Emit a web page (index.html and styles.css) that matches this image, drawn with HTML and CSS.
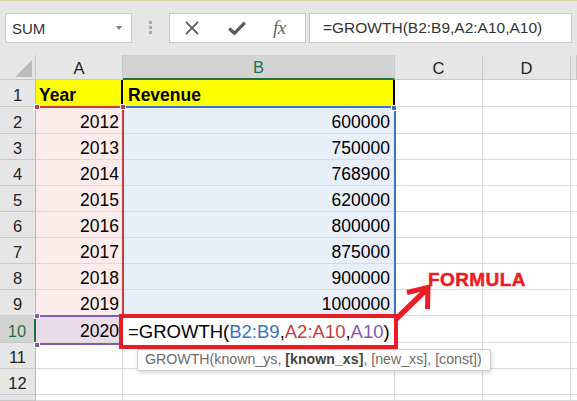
FILE: index.html
```html
<!DOCTYPE html>
<html>
<head>
<meta charset="utf-8">
<link rel="stylesheet" href="styles.css">
</head>
<body>
<div class="toolbar">
  <div class="namebox"><span>SUM</span><span class="caret"></span></div>
  <div class="dots"><i></i><i></i><i></i></div>
  <div class="fxbox">
    <svg class="ico-x" width="14" height="14" viewBox="0 0 14 14"><path d="M1 1 L13 13 M13 1 L1 13" stroke="#666" stroke-width="1.8" fill="none"/></svg>
    <svg class="ico-ok" width="18" height="14" viewBox="0 0 18 14"><path d="M1.2 7.5 L6.5 12.3 L16.8 1.6" stroke="#5a5a5a" stroke-width="3.2" fill="none"/></svg>
    <span class="fx">fx</span>
  </div>
  <div class="formula">=GROWTH(B2:B9,A2:A10,A10)</div>
</div>

<div class="grid">
  <div class="cell hdr corner"><span class="tri"></span></div>
  <div class="cell hdr">A</div>
  <div class="cell hdr sel">B</div>
  <div class="cell hdr">C</div>
  <div class="cell hdr">D</div>
  <div class="cell hdr"></div>

  <div class="cell rowh">1</div>
  <div class="cell yel a1">Year</div>
  <div class="cell yel b1">Revenue</div>
  <div class="cell"></div><div class="cell"></div><div class="cell"></div>

  <div class="cell rowh">2</div>
  <div class="cell num ra">2012</div>
  <div class="cell num rb">600000</div>
  <div class="cell"></div><div class="cell"></div><div class="cell"></div>

  <div class="cell rowh">3</div>
  <div class="cell num ra">2013</div>
  <div class="cell num rb">750000</div>
  <div class="cell"></div><div class="cell"></div><div class="cell"></div>

  <div class="cell rowh">4</div>
  <div class="cell num ra">2014</div>
  <div class="cell num rb">768900</div>
  <div class="cell"></div><div class="cell"></div><div class="cell"></div>

  <div class="cell rowh">5</div>
  <div class="cell num ra">2015</div>
  <div class="cell num rb">620000</div>
  <div class="cell"></div><div class="cell"></div><div class="cell"></div>

  <div class="cell rowh">6</div>
  <div class="cell num ra">2016</div>
  <div class="cell num rb">800000</div>
  <div class="cell"></div><div class="cell"></div><div class="cell"></div>

  <div class="cell rowh">7</div>
  <div class="cell num ra">2017</div>
  <div class="cell num rb">875000</div>
  <div class="cell"></div><div class="cell"></div><div class="cell"></div>

  <div class="cell rowh">8</div>
  <div class="cell num ra">2018</div>
  <div class="cell num rb">900000</div>
  <div class="cell"></div><div class="cell"></div><div class="cell"></div>

  <div class="cell rowh">9</div>
  <div class="cell num ra">2019</div>
  <div class="cell num rb">1000000</div>
  <div class="cell"></div><div class="cell"></div><div class="cell"></div>

  <div class="cell rowh rsel">10</div>
  <div class="cell num rp">2020</div>
  <div class="cell"></div>
  <div class="cell"></div><div class="cell"></div><div class="cell"></div>

  <div class="cell rowh">11</div>
  <div class="cell"></div><div class="cell"></div><div class="cell"></div><div class="cell"></div><div class="cell"></div>

  <div class="cell rowh">12</div>
  <div class="cell"></div><div class="cell"></div><div class="cell"></div><div class="cell"></div><div class="cell"></div>

  <div class="cell rowh"></div>
  <div class="cell"></div><div class="cell"></div><div class="cell"></div><div class="cell"></div><div class="cell"></div>
</div>

<div class="range r-blue"></div>
<div class="range r-red"></div>
<div class="range r-purple"></div>
<span class="handle h-red h1"></span>
<span class="handle h-red h2"></span>
<span class="handle h-blue h3"></span>
<span class="handle h-purple h4"></span>
<span class="handle h-purple h5"></span>

<div class="editor">=GROWTH(<span class="fb">B2:B9</span>,<span class="fr">A2:A10</span>,<span class="fp">A10</span>)</div>
<div class="tip">GROWTH(known_ys, <b>[known_xs]</b>, [new_xs], [const])</div>

<div class="label">FORMULA</div>
<svg class="arrow" width="577" height="401" viewBox="0 0 577 401">
  <path d="M396 319 L426 290" stroke="#ec1c24" stroke-width="5.5" fill="none"/>
  <path d="M407 292.5 L428 287.5 L427.5 309" stroke="#ec1c24" stroke-width="5" fill="none" stroke-linejoin="miter"/>
</svg>
</body>
</html>
```
FILE: styles.css
```css
html, body {
  margin: 0;
  padding: 0;
}
body {
  width: 577px;
  height: 401px;
  overflow: hidden;
  position: relative;
  background: #fff;
  font-family: "Liberation Sans", Arial, sans-serif;
  color: #000;
}

/* ---------- toolbar ---------- */
.toolbar {
  height: 55px;
  box-sizing: border-box;
  border-top: 1px solid #d9d6a2;
  background: #e6e6e6;
  display: flex;
  align-items: flex-start;
  padding: 12px 0 0 5px;
}
.namebox {
  width: 127px;
  height: 30px;
  box-sizing: border-box;
  border: 1px solid #c6c6c6;
  background: #fff;
  display: flex;
  align-items: center;
  justify-content: space-between;
  padding: 0 9px 0 6px;
  font-size: 15px;
  color: #333;
}
.caret {
  width: 0;
  height: 0;
  border-left: 3.5px solid transparent;
  border-right: 3.5px solid transparent;
  border-top: 4px solid #7a7a7a;
}
.dots {
  margin-left: 17px;
  margin-top: 8px;
  display: flex;
  flex-direction: column;
  gap: 2px;
}
.dots i {
  display: block;
  width: 3px;
  height: 3px;
  background: #a8a8a8;
}
.fxbox {
  margin-left: 17px;
  width: 137px;
  height: 30px;
  box-sizing: border-box;
  border: 1px solid #c6c6c6;
  background: #fff;
  display: flex;
  align-items: center;
  padding-left: 15px;
}
.ico-ok {
  margin-left: 29px;
}
.fx {
  margin-left: 27px;
  font-family: "Liberation Serif", "Times New Roman", serif;
  font-style: italic;
  font-size: 19px;
  color: #666;
  letter-spacing: -0.5px;
}
.formula {
  margin-left: 3px;
  width: 263px;
  height: 30px;
  box-sizing: border-box;
  border: 1px solid #c6c6c6;
  background: #fff;
  padding-left: 13px;
  font-size: 15.5px;
  line-height: 28px;
  color: #333;
  white-space: nowrap;
}

/* ---------- grid ---------- */
.grid {
  display: grid;
  grid-template-columns: 36px 87px 272px 88px 88px 6px;
  grid-template-rows: 25px 27px 27px 26px 26px 26px 26px 26px 26px 26px 27px 26px 26px 6px;
  overflow: hidden;
}
.cell {
  box-sizing: border-box;
  border-right: 1px solid #dadada;
  border-bottom: 1px solid #dadada;
  font-size: 17.5px;
  line-height: 20px;
  display: flex;
  align-items: flex-end;
  padding: 0 3px 1px 3px;
  white-space: nowrap;
  overflow: hidden;
  min-width: 0;
}
.num {
  justify-content: flex-end;
}
.hdr {
  background: #e6e6e6;
  border-right-color: #c8c8c8;
  border-bottom-color: #c8c8c8;
  justify-content: center;
  font-size: 16.5px;
  color: #222;
  padding: 0 0 1px 0;
}
.hdr.sel {
  background: #d3d3d3;
  color: #217346;
  border-bottom: 2px solid #217346;
}
.corner {
  justify-content: flex-end;
  padding: 0 3px 2px 0;
}
.tri {
  width: 0;
  height: 0;
  border-left: 17px solid transparent;
  border-bottom: 17px solid #bcbcbc;
}
.rowh {
  background: #e6e6e6;
  border-right-color: #b9b9b9;
  border-bottom-color: #c8c8c8;
  justify-content: center;
  font-size: 16.5px;
  color: #222;
  padding: 0 0 1px 0;
}
.rowh.rsel {
  background: #d3d3d3;
  color: #217346;
  border-right: 2px solid #217346;
}
.yel {
  background: #ffff00;
  font-weight: bold;
  padding-left: 3px;
}
.b1 {
  padding-left: 5px;
  border-right: 2px solid #000;
}
.a1 {
  border-right: 2px solid #000;
}
.ra {
  background: #fbeceb;
}
.rb {
  background: #e9eff9;
  padding-right: 4px;
}
.rp {
  background: #e9dce7;
}

/* ---------- overlays ---------- */
.range {
  position: absolute;
  box-sizing: border-box;
  pointer-events: none;
}
.r-blue {
  left: 123px;
  top: 106px;
  width: 273px;
  height: 211px;
  border: 2px solid #3c72c6;
  border-left: none;
  border-bottom: none;
}
.r-red {
  left: 36px;
  top: 106px;
  width: 88px;
  height: 211px;
  border: 2px solid #c43d3a;
  border-left: none;
  border-bottom: none;
}
.r-purple {
  left: 36px;
  top: 315px;
  width: 88px;
  height: 30px;
  border: 2px solid #7e5cb5;
  border-left: none;
}
.handle {
  position: absolute;
  width: 6px;
  height: 6px;
  box-sizing: border-box;
  border: 1px solid #fff;
}
.h-red { background: #c43d3a; }
.h-blue { background: #3c72c6; }
.h-purple { background: #7e5cb5; }
.h1 { left: 34px; top: 104px; }
.h2 { left: 120px; top: 104px; }
.h3 { left: 391px; top: 105px; }
.h4 { left: 34px; top: 313px; }
.h5 { left: 34px; top: 342px; }

.editor {
  position: absolute;
  left: 119px;
  top: 314px;
  width: 279px;
  height: 35px;
  box-sizing: border-box;
  border: 4px solid #ec1c24;
  background: #fff;
  font-size: 18.5px;
  line-height: 27px;
  padding-left: 5px;
  white-space: nowrap;
  color: #000;
}
.fb { color: #3c72c6; }
.fr { color: #c43d3a; }
.fp { color: #8059b8; }

.tip {
  position: absolute;
  left: 137px;
  top: 349px;
  width: 354px;
  height: 22px;
  box-sizing: border-box;
  border: 1px solid #cfcfcf;
  border-radius: 2px;
  background: #fff;
  box-shadow: 1px 2px 4px rgba(0, 0, 0, 0.16);
  font-size: 14.2px;
  line-height: 19px;
  color: #6b6b6b;
  padding-left: 7px;
  white-space: nowrap;
}
.tip b {
  color: #444;
}

.label {
  position: absolute;
  left: 428px;
  top: 270px;
  font-size: 19px;
  line-height: 19px;
  font-weight: bold;
  letter-spacing: 0.4px;
  color: #ec1c24;
  -webkit-text-stroke: 0.5px #ec1c24;
}
.arrow {
  position: absolute;
  left: 0;
  top: 0;
  pointer-events: none;
}
```
